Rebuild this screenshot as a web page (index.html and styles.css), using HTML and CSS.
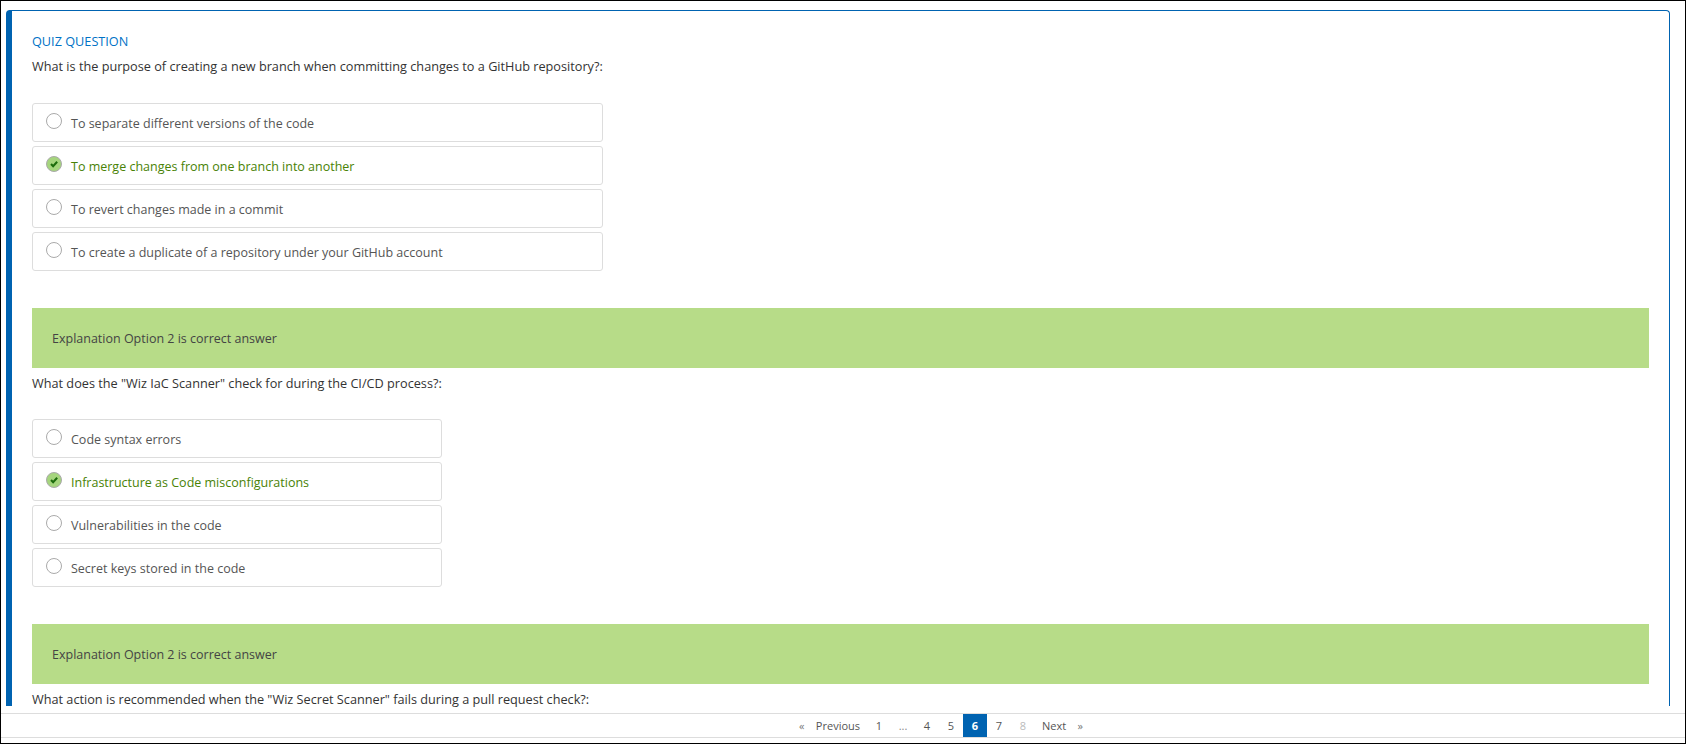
FILE: index.html
```html
<!DOCTYPE html>
<html lang="en">
<head>
<meta charset="utf-8">
<title>Quiz question</title>
<link rel="stylesheet" href="styles.css">
</head>
<body>
<div class="app">
  <main class="scroller">
    <section class="card">
      <h2 class="eyebrow">QUIZ QUESTION</h2>

      <div class="quiz">
        <p class="question">What is the purpose of creating a new branch when committing changes to a GitHub repository?:</p>
        <ul class="options">
          <li class="option"><span class="radio"></span><span>To separate different versions of the code</span></li>
          <li class="option correct"><span class="radio"><svg viewBox="0 0 16 16" class="check"><path d="M4.6 8l2.4 2.5 4.6-5"/></svg></span><span>To merge changes from one branch into another</span></li>
          <li class="option"><span class="radio"></span><span>To revert changes made in a commit</span></li>
          <li class="option"><span class="radio"></span><span>To create a duplicate of a repository under your GitHub account</span></li>
        </ul>
      </div>
      <div class="explanation">Explanation Option 2 is correct answer</div>

      <div class="quiz">
        <p class="question">What does the "Wiz IaC Scanner" check for during the CI/CD process?:</p>
        <ul class="options">
          <li class="option"><span class="radio"></span><span>Code syntax errors</span></li>
          <li class="option correct"><span class="radio"><svg viewBox="0 0 16 16" class="check"><path d="M4.6 8l2.4 2.5 4.6-5"/></svg></span><span>Infrastructure as Code misconfigurations</span></li>
          <li class="option"><span class="radio"></span><span>Vulnerabilities in the code</span></li>
          <li class="option"><span class="radio"></span><span>Secret keys stored in the code</span></li>
        </ul>
      </div>
      <div class="explanation">Explanation Option 2 is correct answer</div>

      <div class="quiz">
        <p class="question">What action is recommended when the "Wiz Secret Scanner" fails during a pull request check?:</p>
      </div>
    </section>
  </main>
  <nav class="pager">
    <a class="page arrow">«</a>
    <a class="page wide">Previous</a>
    <a class="page">1</a>
    <a class="page muted">...</a>
    <a class="page">4</a>
    <a class="page">5</a>
    <a class="page active">6</a>
    <a class="page">7</a>
    <a class="page disabled">8</a>
    <a class="page wide">Next</a>
    <a class="page arrow">»</a>
  </nav>
</div>
</body>
</html>
```
FILE: styles.css
```css
* { box-sizing: border-box; }
html, body { margin: 0; height: 100%; }
body {
  font-family: "Open Sans", "Noto Sans", sans-serif;
  font-size: 12.5px;
  color: #444;
  background: #fff;
  overflow: hidden;
}
.app {
  height: 744px;
  border: 1px solid #000;
  display: flex;
  flex-direction: column;
}
.scroller {
  flex: 1;
  min-height: 0;
  overflow: hidden;
  padding: 9px 15px 7px 5px;
}
.card {
  height: 100%;
  border: 1px solid #0063b1;
  border-bottom: 0;
  border-left-width: 6px;
  border-radius: 4px 4px 0 0;
  padding: 22px 20px 0 20px;
}
.eyebrow {
  margin: 0;
  font-size: 12.7px;
  line-height: 16px;
  font-weight: 400;
  color: #0072c6;
}
.quiz { width: fit-content; }
.question {
  margin: 0;
  font-size: 12.7px;
  line-height: 14px;
  font-weight: 500;
  color: #333;
}
.eyebrow + .quiz .question { margin-top: 10px; padding-bottom: 1px; }
.options {
  list-style: none;
  margin: 29px 0 37px;
  padding: 0;
  display: flex;
  flex-direction: column;
  gap: 4px;
}
.option {
  height: 39px;
  padding: 1px 13px 0;
  border: 1px solid #ddd;
  border-radius: 3px;
  display: flex;
  align-items: center;
  gap: 9px;
  color: #555;
}
.radio {
  width: 16px;
  height: 16px;
  border: 1px solid #aaa;
  border-radius: 50%;
  flex: none;
  margin-top: -5px;
  display: flex;
}
.correct { color: #498205; }
.correct .radio { background: #a5d57d; border-color: #aaa; }
.check { width: 14px; height: 14px; fill: none; stroke: #1c6b0c; stroke-width: 2.4; }
.explanation {
  height: 60px;
  padding: 0 20px;
  display: flex;
  align-items: center;
  background: #b7dc88;
  color: #444;
  margin-bottom: 8px;
}
.pager {
  height: 25px;
  margin-bottom: 5px;
  padding-left: 196px;
  border-top: 1px solid #ddd;
  border-bottom: 1px solid #ddd;
  display: flex;
  justify-content: center;
  font-size: 11px;
  color: #555;
}
.page {
  min-width: 24px;
  height: 23px;
  display: flex;
  align-items: center;
  justify-content: center;
}
.wide { padding: 0 7px; }
.arrow { min-width: 14px; color: #777; }
.muted { color: #888; }
.disabled { color: #bbb; }
.active { background: #0063b1; color: #fff; font-weight: 700; }
```
